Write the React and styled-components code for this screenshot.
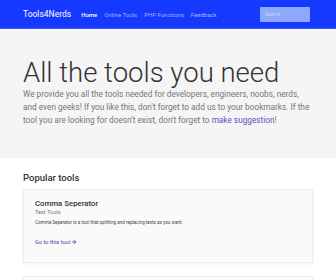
import styled, { createGlobalStyle } from 'styled-components';
import { ArrowRight } from 'lucide-react';

const GlobalStyle = createGlobalStyle`
  body {
    margin: 0;
    font-family: Roboto, "Liberation Sans", sans-serif;
    background: #fff;
  }
`;

const Navbar = styled.nav`
  display: flex;
  align-items: center;
  height: 28px;
  padding: 0 26px 0 23px;
  background-color: #1539ff;
  border-bottom: 1px solid #3a5cff;
`;

const Brand = styled.a`
  font-size: 8.5px;
  color: #fff;
  margin-right: 10px;
`;

const NavLink = styled.a`
  font-size: 6px;
  margin-right: 7px;
  color: ${(p) => (p.active ? '#fff' : 'rgba(255, 255, 255, 0.6)')};
  font-weight: ${(p) => (p.active ? 500 : 400)};
`;

const Search = styled.input`
  margin-left: auto;
  width: 50px;
  height: 15px;
  box-sizing: border-box;
  border: none;
  border-radius: 1px;
  background: #8fa9ff;
  padding: 0 5px;
  font-family: inherit;
  font-size: 5px;
  &::placeholder {
    color: #c7d4ff;
  }
`;

const Hero = styled.header`
  background: #f5f5f6;
  padding: 29px 23px 31px;
`;

const Title = styled.h1`
  margin: 0;
  font-size: 27.5px;
  font-weight: 300;
  line-height: 30px;
  color: #333;
`;

const Lead = styled.p`
  margin: 0;
  font-size: 8.25px;
  line-height: 13px;
  color: #757575;
  a {
    color: #5b4fc4;
    text-decoration: none;
  }
`;

const Section = styled.section`
  padding: 14px 23px 0;
`;

const SectionTitle = styled.h2`
  margin: 0 0 6px;
  font-size: 9.5px;
  font-weight: 500;
  color: #333;
`;

const Card = styled.div`
  border: 1px solid #ececec;
  border-radius: 2px;
  background: #fafafa;
  box-shadow: 0 1px 3px rgba(0, 0, 0, 0.06);
  padding: 9px 11px 14px;
  margin-bottom: 13px;
  min-height: 46px;
`;

const CardTitle = styled.h3`
  margin: 0 0 1px;
  font-size: 7.8px;
  font-weight: 500;
  color: #333;
`;

const CardSub = styled.div`
  font-size: 5.6px;
  color: #777;
  margin-bottom: 5px;
`;

const CardText = styled.p`
  margin: 0 0 4px;
  font-size: 4.6px;
  color: #444;
`;

const CardLink = styled.a`
  display: inline-flex;
  align-items: center;
  gap: 1px;
  font-size: 5.7px;
  color: #3b3fa6;
`;

export default function App() {
  return (
    <>
      <GlobalStyle />
      <Navbar>
        <Brand>Tools4Nerds</Brand>
        <NavLink active>Home</NavLink>
        <NavLink>Online Tools</NavLink>
        <NavLink>PHP Functions</NavLink>
        <NavLink>Feedback</NavLink>
        <Search placeholder="Search" />
      </Navbar>
      <Hero>
        <Title>All the tools you need</Title>
        <Lead>
          We provide you all the tools needed for developers, engineers, noobs, nerds,
          and even geeks! If you like this, don't forget to add us to your bookmarks. If the
          tool you are looking for doesn't exist, don't forget to <a href="#">make suggestion</a>!
        </Lead>
      </Hero>
      <Section>
        <SectionTitle>Popular tools</SectionTitle>
        <Card>
          <CardTitle>Comma Seperator</CardTitle>
          <CardSub>Text Tools</CardSub>
          <CardText>Comma Seperator is a tool that splitting and replacing texts as you want.</CardText>
          <CardLink>
            Go to this tool <ArrowRight size={6} strokeWidth={3} />
          </CardLink>
        </Card>
        <Card />
      </Section>
    </>
  );
}
